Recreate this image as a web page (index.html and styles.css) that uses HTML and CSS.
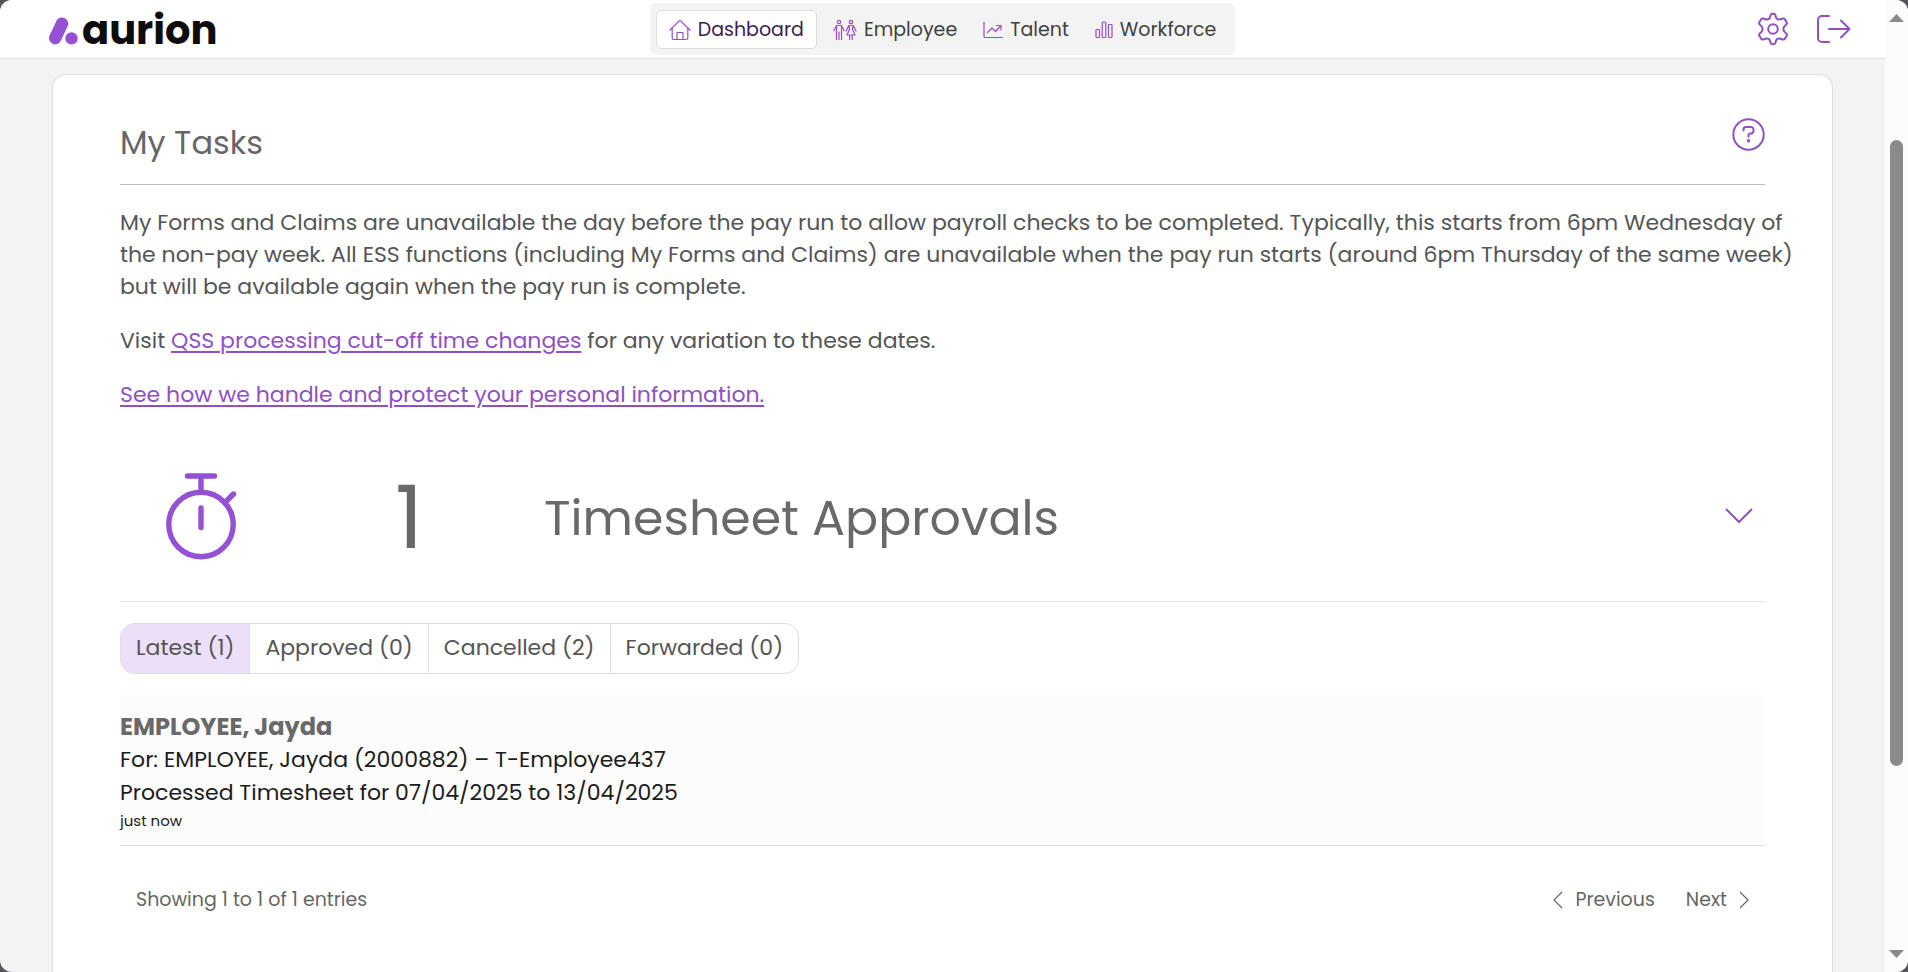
FILE: index.html
```
<!DOCTYPE html>
<html lang="en">
<head>
<meta charset="utf-8">
<title>My Tasks</title>
<link rel="stylesheet" href="styles.css">
</head>
<body>
<div class="window">
  <div class="page">
    <header class="topbar">
      <a class="brand" href="#">
        <svg class="brand-mark" width="30" height="28" viewBox="0 0 30 28" aria-hidden="true">
          <path d="M7.200 21.200 14 6.600" stroke="#9550d3" stroke-width="12.4" stroke-linecap="round"/>
          <circle cx="23.500" cy="21.400" r="6.200" fill="#9550d3"/>
        </svg>
        <span class="brand-name">aurion</span>
      </a>
      <nav class="tabs-main">
        <a class="nav-item nav-active" href="#">
          <svg class="icon" width="22" height="22" viewBox="0 0 22 22" aria-hidden="true"><path d="M1 11 9.8 2.3a1.7 1.7 0 0 1 2.4 0L21 11M3.2 9v9.8a1.7 1.7 0 0 0 1.7 1.7h12.2a1.7 1.7 0 0 0 1.7-1.7V9M8 20.500V13.500h6v7"/></svg>
          <span>Dashboard</span>
        </a>
        <a class="nav-item" href="#">
          <svg class="icon" width="24" height="22" viewBox="0 0 24 22" aria-hidden="true"><circle cx="6" cy="3" r="1.700"/><circle cx="18" cy="3" r="1.700"/><path d="M1 11.500 3.500 6.500h5L11 11.500M3.500 6.500v14M8.500 6.500v14M6 13v7.500M13 12l2.800-5.500h4.400L23 12M15.800 6.500l.8 3.500-2.600 6h8l-2.600-6 .8-3.500M16.700 16v4.500M19.300 16v4.500"/></svg>
          <span>Employee</span>
        </a>
        <a class="nav-item" href="#">
          <svg class="icon" width="20" height="22" viewBox="0 0 20 22" aria-hidden="true"><path d="M1 3v14.500a1 1 0 0 0 1 1h17.500M4.500 13.500 9 9l3.500 3.500L18 6.500M13.500 6.500H18V11"/></svg>
          <span>Talent</span>
        </a>
        <a class="nav-item" href="#">
          <svg class="icon" width="18" height="22" viewBox="0 0 18 22" aria-hidden="true"><rect x="1" y="10.500" width="3.500" height="8" rx="0.800"/><rect x="7.200" y="3" width="3.600" height="15.500" rx="0.800"/><rect x="13.500" y="5.500" width="3.500" height="13" rx="0.800"/></svg>
          <span>Workforce</span>
        </a>
      </nav>
      <div class="actions">
        <button class="icon-button" type="button" aria-label="Settings">
          <svg class="icon-strong" width="32" height="34" viewBox="0 0 32 34" aria-hidden="true"><circle cx="16" cy="17" r="4.800"/><path d="M13.600 3.200Q14 1.800 15.200 1.800h1.600Q18 1.800 18.400 3.200l.7 2.400q.6 1.600 2.300 1.900 1 .2 2-.2l2.500-.8q1.300-.3 1.900.7l1.900 3.100q.6 1.100-.4 2.100l-1.900 2q-1 1.100-1 2.600t1 2.600l1.900 2q1 1 .4 2.100l-1.900 3.100q-.6 1-1.900.7l-2.500-.8q-1-.4-2-.2-1.700.3-2.300 1.900l-.7 2.400q-.4 1.400-1.600 1.400h-1.600q-1.200 0-1.600-1.400l-.7-2.400q-.6-1.600-2.300-1.900-1-.2-2 .2l-2.500.8q-1.300.3-1.900-.7l-1.900-3.100q-.6-1.100.4-2.100l1.900-2q1-1.100 1-2.600t-1-2.600l-1.900-2q-1-1-.4-2.100l1.900-3.100q.6-1 1.900-.7l2.500.8q1 .4 2 .2 1.700-.3 2.300-1.900z"/></svg>
        </button>
        <button class="icon-button" type="button" aria-label="Log out">
          <svg class="icon-strong" width="34" height="30" viewBox="0 0 34 30" aria-hidden="true"><path d="M12 2H5a4 4 0 0 0-4 4v18a4 4 0 0 0 4 4h7M12 15h20.500M24 6.500l8.500 8.500-8.500 8.500"/></svg>
        </button>
      </div>
    </header>
    <main class="content">
      <section class="card">
        <div class="card-head">
          <h1>My Tasks</h1>
          <button class="icon-button" type="button" aria-label="Help">
            <svg class="icon-strong" width="33" height="33" viewBox="0 0 33 33" aria-hidden="true"><circle cx="16.500" cy="16.500" r="15.200"/><path d="M11.500 12.500v-1a2.500 2.500 0 0 1 2.500-2.500h5a2.500 2.500 0 0 1 2.500 2.500v1.500a2.500 2.500 0 0 1-2.500 2.500h-.5a2 2 0 0 0-2 2v1.300"/><circle cx="16.500" cy="22.800" r="0.700"/></svg>
          </button>
        </div>
        <div class="notice">
          <p>My Forms and Claims are unavailable the day before the pay run to allow payroll checks to be completed. Typically, this starts from 6pm Wednesday of the non-pay week. All ESS functions (including My Forms and Claims) are unavailable when the pay run starts (around 6pm Thursday of the same week) but will be available again when the pay run is complete.</p>
          <p>Visit <a href="#">QSS processing cut-off time changes</a> for any variation to these dates.</p>
          <p><a href="#">See how we handle and protect your personal information.</a></p>
        </div>
        <div class="summary">
          <svg class="stopwatch" width="72" height="88" viewBox="0 0 72 88" aria-hidden="true"><circle cx="36" cy="52.500" r="32.200"/><path d="M22.500 4h27M36 4v16M61 29.500l7.500-7.500M36 36v19.500"/></svg>
          <span class="count">1</span>
          <h2>Timesheet Approvals</h2>
          <button class="icon-button" type="button" aria-label="Collapse">
            <svg class="icon-strong" width="28" height="16" viewBox="0 0 28 16" aria-hidden="true"><path d="M1.500 1.500 14 14 26.500 1.500"/></svg>
          </button>
        </div>
        <div class="filters">
          <button class="filter filter-on" type="button">Latest (1)</button>
          <button class="filter" type="button">Approved (0)</button>
          <button class="filter" type="button">Cancelled (2)</button>
          <button class="filter" type="button">Forwarded (0)</button>
        </div>
        <article class="entry">
          <h3>EMPLOYEE, Jayda</h3>
          <p>For: EMPLOYEE, Jayda (2000882) – T-Employee437</p>
          <p>Processed Timesheet for 07/04/2025 to 13/04/2025</p>
          <p class="when">just now</p>
        </article>
        <footer class="pager">
          <span class="showing">Showing 1 to 1 of 1 entries</span>
          <button class="page-button" type="button">
            <svg width="10" height="18" viewBox="0 0 10 18" aria-hidden="true"><path d="M9 1 1 9l8 8"/></svg>
            <span>Previous</span>
          </button>
          <button class="page-button" type="button">
            <span>Next</span>
            <svg width="10" height="18" viewBox="0 0 10 18" aria-hidden="true"><path d="M1 1l8 8-8 8"/></svg>
          </button>
        </footer>
      </section>
    </main>
  </div>
  <div class="scrollbar" aria-hidden="true">
    <svg width="15" height="8" viewBox="0 0 15 8"><path d="M0 8 7.500 0 15 8z" fill="#8a8a8a"/></svg>
    <div class="track"><div class="thumb"></div></div>
    <svg width="15" height="8" viewBox="0 0 15 8"><path d="M0 0h15L7.500 8z" fill="#8a8a8a"/></svg>
  </div>
</div>
</body>
</html>
```
FILE: styles.css
```
* { box-sizing: border-box; }
html { background: #55555a; }
body {
  margin: 0;
  color: #555;
  font-family: Poppins, Inter, "Open Sans", sans-serif;
  font-size: 22px;
  line-height: 32px;
}
h1, h2, h3, p { margin: 0; font-weight: 400; }
button {
  margin: 0;
  padding: 0;
  border: 0;
  background: none;
  color: inherit;
  font: inherit;
  cursor: pointer;
}
svg { display: block; fill: none; }
.window {
  display: grid;
  grid-template-columns: minmax(0, 1fr) 23px;
  height: 100vh;
  overflow: hidden;
  border-radius: 12px;
  background: #f3f3f3;
}
.page { display: flex; flex-direction: column; min-height: 0; }
.topbar {
  display: grid;
  grid-template-columns: 1fr auto 1fr;
  align-items: center;
  padding: 3px 34px;
  border-bottom: 1px solid #dedede;
  background: #fff;
}
.brand {
  display: flex;
  align-items: center;
  gap: 4px;
  padding-left: 14px;
  color: #0d0d0d;
  text-decoration: none;
}
.brand-mark { margin-top: 4px; }
.brand-name { padding-top: 2px; font-size: 40px; font-weight: 700; line-height: 48px; }
.tabs-main {
  display: flex;
  align-items: center;
  padding: 7px 6px 6px;
  border-radius: 6px;
  background: #f3f3f3;
  font-size: 19px;
}
.nav-item {
  display: flex;
  align-items: center;
  gap: 7px;
  padding: 3px 12px 2px;
  border: 1px solid transparent;
  border-radius: 5px;
  color: #3f3f3f;
  line-height: 32px;
  text-decoration: none;
}
.nav-active { margin-right: 3px; border-color: #dedede; background: #fff; color: #3c1f52; }
.icon { stroke: #9550c8; stroke-width: 1.2; stroke-linejoin: round; stroke-linecap: round; }
.icon-strong { stroke: #9050c4; stroke-width: 2; stroke-linejoin: round; stroke-linecap: round; }
.actions { display: flex; align-items: center; justify-content: flex-end; gap: 28px; }
.content { display: flex; flex: 1; padding: 15px 52px 0; min-height: 0; }
.card {
  flex: 1;
  min-width: 0;
  padding: 34px 67px 0;
  border: 1px solid #dedede;
  border-bottom: 0;
  border-radius: 14px 14px 0 0;
  background: #fff;
}
.card-head {
  display: flex;
  align-items: flex-start;
  justify-content: space-between;
  padding: 9px 0 18px;
  border-bottom: 1px solid #bdbdbd;
}
.card-head h1 { padding-top: 2px; color: #666; font-size: 32px; line-height: 46px; }
.notice { display: grid; gap: 22px; margin-right: -36px; padding-top: 22px; }
.notice a { color: #9050c4; text-underline-offset: 3px; }
.summary {
  display: flex;
  align-items: center;
  padding: 45px 12px 25px 45px;
  border-bottom: 1px solid #e4e4e4;
  color: #696969;
}
.stopwatch { stroke: #9550d3; stroke-width: 5.4; stroke-linecap: round; }
.count { width: 307px; padding: 4px 0 0 158px; font-size: 88px; line-height: 116px; }
.summary h2 { flex: 1; padding-top: 4px; font-size: 49px; line-height: 72px; }
.filters {
  display: inline-flex;
  margin: 21px 0;
  border: 1px solid #dedede;
  border-radius: 14px;
  overflow: hidden;
  vertical-align: top;
}
.filter { padding: 8px 15px 9px; }
.filter + .filter { border-left: 1px solid #dedede; }
.filter-on { background: #ecdffa; }
.entry {
  padding: 15px 0 13px;
  border-bottom: 1px solid #e6deea;
  background: #fcfcfc;
  color: #1c1c1c;
}
.entry h3 { color: #696969; font-size: 24px; font-weight: 700; line-height: 33px; }
.entry p { line-height: 33px; }
.entry .when { font-size: 15px; line-height: 23px; }
.pager {
  display: flex;
  align-items: center;
  gap: 31px;
  padding: 38px 16px;
  color: #666;
  font-size: 19px;
}
.showing { flex: 1; }
.page-button { display: flex; align-items: center; gap: 12px; }
.page-button svg { stroke: #666; stroke-width: 1.2; }
.scrollbar {
  display: flex;
  flex-direction: column;
  align-items: center;
  padding: 14px 0;
  background: #fcfcfc;
}
.track { display: flex; flex: 1; flex-direction: column; padding: 118px 0 184px; }
.thumb { flex: 1; width: 13px; border-radius: 7px; background: #8a8a8a; }
```
